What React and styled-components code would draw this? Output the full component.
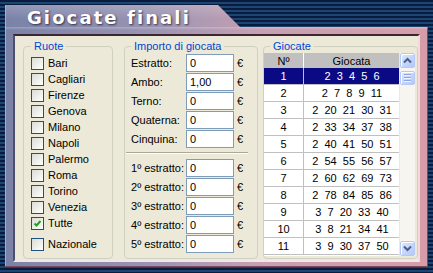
import React from 'react';
import styled, { createGlobalStyle } from 'styled-components';

const GlobalStyle = createGlobalStyle`
  html, body { margin: 0; padding: 0; }
  body {
    width: 433px;
    height: 273px;
    overflow: hidden;
    background: repeating-linear-gradient(180deg, #0a1c3e 0px, #0a1c3e 2px, #1c4573 2px, #1c4573 4px);
    font-family: "Liberation Sans", Arial, sans-serif;
    font-size: 11px;
    color: #000;
  }
`;

const Screen = styled.div`
  padding: 5px 0 0 5px;
`;

// the tab shape + frame share one gradient, the slanted corner is cut off
const Window = styled.div`
  width: 423px;
  height: 262px;
  box-sizing: border-box;
  display: flex;
  flex-direction: column;
  background:
    linear-gradient(180deg, rgba(255,255,255,0.18) 0px, rgba(255,255,255,0) 14px),
    linear-gradient(90deg, #7a82a8 0%, #9a94b2 35%, #c6a0b2 60%, #d79ca8 100%);
  clip-path: polygon(0 0, 213px 0, 235px 22px, 100% 22px, 100% 100%, 0 100%);
  box-shadow: inset -1px -1px 0 #7a4a5c, inset 1px 0 0 #a8aed0;
`;

const TitleBar = styled.div`
  height: 22px;
  box-sizing: border-box;
  padding: 3px 0 0 22px;
  font-family: "DejaVu Sans", Verdana, sans-serif;
  font-weight: bold;
  font-size: 18px;
  line-height: 20px;
  letter-spacing: 2.1px;
  color: #fff;
  text-shadow: 1px 1px 2px rgba(20, 20, 40, 0.75);
  white-space: nowrap;
`;

const Body = styled.div`
  flex: 1;
  display: flex;
  padding: 7px 9px 5px 8px;
  background: linear-gradient(180deg, rgba(255,255,255,0.25) 0px, rgba(255,255,255,0) 3px);
`;

const Panel = styled.div`
  flex: 1;
  display: flex;
  align-items: stretch;
  box-sizing: border-box;
  background: #ece9d8;
  border-top: 2px solid #3c2632;
  border-left: 2px solid #50506a;
  border-bottom: 2px solid #f2e6ee;
  border-right: 2px solid #f4d8de;
  padding: 4px 0 1px 8px;
`;

const Group = styled.fieldset`
  margin: 0 0 0 ${p => p.$gap || 0}px;
  width: ${p => p.$w}px;
  box-sizing: border-box;
  border: 1px solid #d0d0bf;
  border-radius: 4px;
  padding: ${p => p.$pad};
  min-width: 0;
`;

const Legend = styled.legend`
  color: #0046d5;
  font-size: 11px;
  line-height: 13px;
  padding: 0 3px;
  margin-left: ${p => p.$ml || 0}px;
`;

const CheckRow = styled.div`
  display: flex;
  align-items: center;
  gap: 4px;
  height: 16px;
  margin-top: ${p => p.$mt || 0}px;
`;

const Box = styled.span`
  width: 13px;
  height: 13px;
  box-sizing: border-box;
  border: 1px solid #1c5180;
  background: linear-gradient(135deg, #dcdcd5 0%, #f4f4f0 70%, #ffffff 100%);
  display: flex;
  align-items: center;
  justify-content: center;
`;

const Check = ({ on }) => (
  <Box>
    {on && (
      <svg width="11" height="11" viewBox="0 0 11 11">
        <polyline points="2.5,5.5 4.5,7.5 8.5,3" fill="none" stroke="#21a121" strokeWidth="2" />
      </svg>
    )}
  </Box>
);

const AmountRow = styled.div`
  display: flex;
  align-items: center;
  height: 19px;
`;

const Label = styled.span`
  width: 55px;
  white-space: nowrap;
`;

const Field = styled.input`
  width: 48px;
  height: 18px;
  box-sizing: border-box;
  border: 1px solid #7f9db9;
  background: #fff;
  padding: 0 0 0 3px;
  margin: 0;
  font-family: "Liberation Sans", Arial, sans-serif;
  font-size: 11px;
  color: #000;
  outline: none;
`;

const Euro = styled.span`
  margin-left: 3px;
`;

const Separator = styled.div`
  height: 1px;
  width: 122px;
  margin: 4px 0 4px -5px;
  background: #aca899;
  border-bottom: 1px solid #fff;
`;

const GridWrap = styled.div`
  display: flex;
  height: 203px;
  margin-left: 0;
`;

const Table = styled.div`
  width: 136px;
  display: grid;
  grid-template-columns: 40px 96px;
  grid-auto-rows: 17px;
  grid-template-rows: 15px;
  align-content: start;
  background: #fff;
  overflow: hidden;
`;

const HeadCell = styled.div`
  background: #c0c0c0;
  border-right: 1px solid ${p => (p.$last ? '#c0c0c0' : '#ffffff')};
  display: flex;
  align-items: center;
  justify-content: center;
`;

const Cell = styled.div`
  box-sizing: border-box;
  border-bottom: 1px solid #c0c0c0;
  border-right: ${p => (p.$first ? '1px solid #c0c0c0' : 'none')};
  background: ${p => (p.$sel ? '#0a0a84' : '#fff')};
  color: ${p => (p.$sel ? '#fff' : '#000')};
  display: flex;
  align-items: center;
  justify-content: center;
  white-space: pre;
`;

const ScrollBar = styled.div`
  width: 15px;
  margin-left: 1px;
  display: flex;
  flex-direction: column;
  background: #f6f5f0;
`;

const ScrollBtn = styled.div`
  width: 15px;
  height: 15px;
  box-sizing: border-box;
  border: 1px solid #b6c9f5;
  border-radius: 2px;
  background: linear-gradient(135deg, #dde7fd 0%, #c2d3fb 60%, #b4c8f8 100%);
  box-shadow: inset 1px 1px 0 #fff;
  display: flex;
  align-items: center;
  justify-content: center;
`;

const Thumb = styled(ScrollBtn)`
  height: 14px;
  margin-top: 3px;
  flex-direction: column;
  gap: 1px;
`;

const Grip = styled.span`
  width: 7px;
  height: 1px;
  background: #8ca5e6;
  border-bottom: 1px solid #eef3ff;
`;

const Spacer = styled.div`
  flex: 1;
`;

const Arrow = ({ up }) => (
  <svg width="9" height="7" viewBox="0 0 9 7">
    <polyline
      points={up ? '1,5.5 4.5,2 8,5.5' : '1,1.5 4.5,5 8,1.5'}
      fill="none"
      stroke="#4d6185"
      strokeWidth="2"
    />
  </svg>
);

const ruote = ['Bari', 'Cagliari', 'Firenze', 'Genova', 'Milano', 'Napoli', 'Palermo', 'Roma', 'Torino', 'Venezia'];

const importi = [
  ['Estratto:', '0'],
  ['Ambo:', '1,00'],
  ['Terno:', '0'],
  ['Quaterna:', '0'],
  ['Cinquina:', '0'],
];

const giocate = [
  '2  3  4  5  6',
  '2  7  8  9  11',
  '2  20  21  30  31',
  '2  33  34  37  38',
  '2  40  41  50  51',
  '2  54  55  56  57',
  '2  60  62  69  73',
  '2  78  84  85  86',
  '3  7  20  33  40',
  '3  8  21  34  41',
  '3  9  30  37  50',
];

export default function App() {
  return (
    <Screen>
      <GlobalStyle />
      <Window>
        <TitleBar>Giocate finali</TitleBar>
        <Body>
          <Panel>
            <Group $w={90} $pad="2px 0 0 7px">
              <Legend>Ruote</Legend>
              {ruote.map(r => (
                <CheckRow key={r}>
                  <Check />
                  <span>{r}</span>
                </CheckRow>
              ))}
              <CheckRow>
                <Check on />
                <span>Tutte</span>
              </CheckRow>
              <CheckRow $mt={5}>
                <Check />
                <span>Nazionale</span>
              </CheckRow>
            </Group>

            <Group $w={134} $gap={11} $pad="0 0 0 6px">
              <Legend>Importo di giocata</Legend>
              {importi.map(([l, v]) => (
                <AmountRow key={l}>
                  <Label>{l}</Label>
                  <Field readOnly value={v} />
                  <Euro>€</Euro>
                </AmountRow>
              ))}
              <Separator />
              {[1, 2, 3, 4, 5].map(n => (
                <AmountRow key={n}>
                  <Label>{n}º estratto:</Label>
                  <Field readOnly value="0" />
                  <Euro>€</Euro>
                </AmountRow>
              ))}
            </Group>

            <Group $w={155} $gap={5} $pad="0 2px 0 0">
              <Legend $ml={6}>Giocate</Legend>
              <GridWrap>
                <Table>
                  <HeadCell>Nº</HeadCell>
                  <HeadCell $last>Giocata</HeadCell>
                  {giocate.map((g, i) => (
                    <React.Fragment key={i}>
                      <Cell $first $sel={i === 0}>{i + 1}</Cell>
                      <Cell $sel={i === 0}>{g}</Cell>
                    </React.Fragment>
                  ))}
                </Table>
                <ScrollBar>
                  <ScrollBtn><Arrow up /></ScrollBtn>
                  <Thumb>
                    <Grip />
                    <Grip />
                    <Grip />
                  </Thumb>
                  <Spacer />
                  <ScrollBtn><Arrow /></ScrollBtn>
                </ScrollBar>
              </GridWrap>
            </Group>
          </Panel>
        </Body>
      </Window>
    </Screen>
  );
}
